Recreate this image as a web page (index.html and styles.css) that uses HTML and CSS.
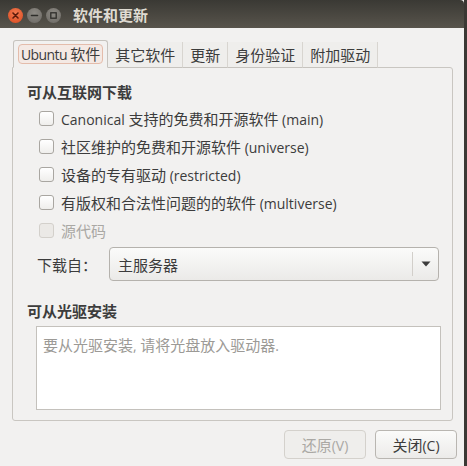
FILE: index.html
```html
<!DOCTYPE html>
<html lang="zh-CN">
<head>
<meta charset="utf-8">
<title>软件和更新</title>
<link rel="stylesheet" href="styles.css">
</head>
<body>
<div class="window">
  <div class="titlebar">
    <div class="wbtns">
      <span class="wbtn close"><svg width="15" height="15" viewBox="0 0 15 15"><path d="M5 5 L10 10 M10 5 L5 10" stroke="#5a1a0a" stroke-width="1.6" stroke-linecap="round"/></svg></span>
      <span class="wbtn"><svg width="15" height="15" viewBox="0 0 15 15"><path d="M4.5 7.5 H10.5" stroke="#2e2d2a" stroke-width="1.6" stroke-linecap="round"/></svg></span>
      <span class="wbtn"><svg width="15" height="15" viewBox="0 0 15 15"><rect x="4.8" y="4.8" width="5.4" height="5.4" fill="none" stroke="#2e2d2a" stroke-width="1.3"/></svg></span>
    </div>
    <div class="title">软件和更新</div>
  </div>
  <div class="body">
    <div class="tabs">
      <div class="tab active"><span class="focus"><span class="lat tight">Ubuntu</span> 软件</span></div>
      <div class="tab">其它软件</div>
      <div class="tab">更新</div>
      <div class="tab">身份验证</div>
      <div class="tab last">附加驱动</div>
    </div>
    <div class="panel">
      <div class="heading">可从互联网下载</div>
      <div class="opts">
        <label class="opt"><span class="cb"></span><span><span class="lat">Canonical </span>支持的免费和开源软件<span class="lat"> (main)</span></span></label>
        <label class="opt"><span class="cb"></span><span>社区维护的免费和开源软件<span class="lat"> (universe)</span></span></label>
        <label class="opt"><span class="cb"></span><span>设备的专有驱动<span class="lat"> (restricted)</span></span></label>
        <label class="opt"><span class="cb"></span><span>有版权和合法性问题的的软件<span class="lat"> (multiverse)</span></span></label>
        <label class="opt disabled"><span class="cb"></span><span>源代码</span></label>
      </div>
      <div class="server">
        <span class="server-label">下载自：</span>
        <div class="combo">
          <span class="combo-text">主服务器</span>
          <span class="combo-arrow"><svg width="10" height="6" viewBox="0 0 10 6"><path d="M0.5 0.5 H9.5 L5 5.5 Z" fill="#3c3c3c"/></svg></span>
        </div>
      </div>
      <div class="heading heading2">可从光驱安装</div>
      <div class="cdbox">要从光驱安装<span class="lat">, </span>请将光盘放入驱动器<span class="lat">.</span></div>
    </div>
    <div class="actions">
      <button class="btn" disabled>还原<span class="lat">(V)</span></button>
      <button class="btn">关闭<span class="lat">(C)</span></button>
    </div>
  </div>
</div>
</body>
</html>
```
FILE: styles.css
```css
html, body {
  margin: 0;
  padding: 0;
}
body {
  background: #3b3834;
  width: 467px;
  height: 466px;
  overflow: hidden;
  font-family: "Noto Sans CJK SC", sans-serif;
  font-size: 15px;
  color: #3c3c3c;
}
.lat {
  font-family: "Open Sans", "Noto Sans CJK SC", sans-serif;
  font-size: 14px;
}
.lat.tight {
  letter-spacing: -0.6px;
}
.window {
  width: 464px;
  height: 466px;
  background: #f2f1f0;
  display: flex;
  flex-direction: column;
}
.titlebar {
  height: 28px;
  background: linear-gradient(#3a3934, #58544c);
  display: flex;
  align-items: center;
  padding-left: 8px;
  box-sizing: border-box;
  border-top-right-radius: 4px;
}
.wbtns {
  display: flex;
  gap: 4px;
  margin-top: 2px;
}
.wbtn {
  width: 15px;
  height: 15px;
  border-radius: 50%;
  background: radial-gradient(circle at 50% 35%, #8d8a84, #6a6762);
  display: flex;
}
.wbtn.close {
  background: radial-gradient(circle at 50% 35%, #f27a4f, #d9491f);
}
.title {
  margin-left: 12px;
  color: #dfdbd2;
  font-weight: bold;
  font-size: 15px;
  line-height: 28px;
  margin-top: 1px;
}
.body {
  flex: 1;
  display: flex;
  flex-direction: column;
  padding: 12px 7px 0 12px;
}
.tabs {
  display: flex;
  height: 28px;
  padding-left: 1px;
  align-items: flex-end;
  margin-bottom: -1px;
  position: relative;
  z-index: 1;
}
.tab {
  height: 26px;
  display: flex;
  align-items: center;
  padding: 0 7px;
  box-sizing: border-box;
  border-right: 1px solid #d8d5d0;
  border-bottom: 1px solid #c6c3be;
  font-size: 15px;
  color: #3c3c3c;
  background: #efeeec;
}
.tab.active {
  height: 28px;
  border: 1px solid #c6c3be;
  border-bottom: 1px solid #f2f1f0;
  border-radius: 3px 3px 0 0;
  background: #f2f1f0;
  padding: 0 4px;
}
.focus {
  border: 1px solid #e4bcab;
  background: #f4e9e4;
  border-radius: 4px;
  padding: 0 2px;
  line-height: 17px;
}
.panel {
  width: 441px;
  height: 354px;
  box-sizing: border-box;
  border: 1px solid #c9c6c1;
  border-radius: 0 3px 3px 3px;
  padding: 14px 11px 10px 14px;
  display: flex;
  flex-direction: column;
}
.heading {
  font-weight: bold;
  font-size: 15px;
  line-height: 20px;
  height: 20px;
  color: #3c3c3c;
}
.opts {
  margin-top: 2px;
  display: flex;
  flex-direction: column;
}
.opt {
  height: 28px;
  display: flex;
  align-items: center;
  padding-left: 12px;
  gap: 7px;
  font-size: 15px;
  color: #3c3c3c;
  white-space: nowrap;
}
.cb {
  width: 15px;
  height: 15px;
  box-sizing: border-box;
  border: 1px solid #a9a6a1;
  border-radius: 3px;
  background: linear-gradient(#ffffff, #efeeec);
  flex: none;
}
.opt.disabled {
  color: #aaa8a4;
}
.opt.disabled .cb {
  border-color: #d3d0cb;
  background: #ebe9e6;
}
.server {
  margin-top: 3px;
  display: flex;
  align-items: center;
  height: 34px;
  padding-left: 10px;
}
.server-label {
  width: 72px;
  font-size: 15px;
}
.combo {
  width: 330px;
  height: 34px;
  box-sizing: border-box;
  border: 1px solid #b5b2ad;
  border-radius: 4px;
  background: linear-gradient(#fbfbfa, #ebeae8);
  display: flex;
  align-items: center;
}
.combo-text {
  flex: 1;
  padding-left: 8px;
  font-size: 15px;
}
.combo-arrow {
  width: 25px;
  height: 24px;
  border-left: 1px solid #d2cfca;
  display: flex;
  align-items: center;
  justify-content: center;
}
.heading2 {
  margin-top: 20px;
}
.cdbox {
  margin-top: 5px;
  margin-left: 9px;
  height: 84px;
  box-sizing: border-box;
  border: 1px solid #c4c1bc;
  background: #ffffff;
  padding: 8px 6px;
  font-size: 15px;
  color: #9c9a96;
  line-height: 20px;
}
.actions {
  display: flex;
  justify-content: flex-end;
  gap: 9px;
  margin-top: 9px;
}
.btn {
  width: 82px;
  height: 29px;
  box-sizing: border-box;
  border: 1px solid #b9b6b1;
  border-radius: 4px;
  background: linear-gradient(#fbfbfa, #ecebe9);
  font-family: "Noto Sans CJK SC", sans-serif;
  font-size: 15px;
  color: #3c3c3c;
  padding: 0;
}
.btn:disabled {
  border-color: #d4d1cc;
  background: #efeeec;
  color: #aaa8a4;
}
```
